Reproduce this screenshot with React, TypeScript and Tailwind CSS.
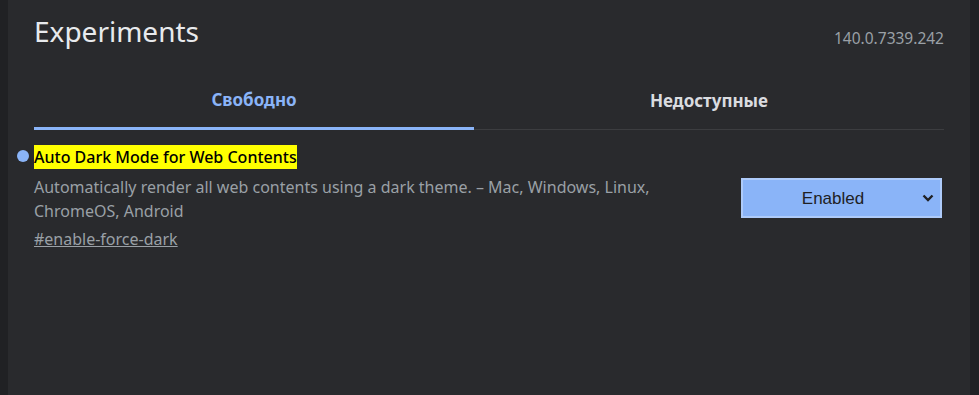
import React from "react";

const Chevron = () => (
  <svg width="12" height="8" viewBox="0 0 12 8" className="text-[#202124]">
    <path d="M1.5 1.5 L6 6 L10.5 1.5" fill="none" stroke="currentColor" strokeWidth="2.4" />
  </svg>
);

export default function App() {
  return (
    <div className="flex h-[395px] w-[979px] bg-[#202124] font-['Noto_Sans',sans-serif]">
      <div className="w-2 shrink-0 bg-[#202124]" />
      <div className="flex-1 bg-[#292a2d] pl-[26px] pr-[26px]">
        {/* header */}
        <div className="flex items-start justify-between pt-[12px]">
          <h1 className="text-[28px] leading-[38px] text-[#e8eaed]">Experiments</h1>
          <span className="mt-[15px] text-[15.5px] text-[#9aa0a6]">140.0.7339.242</span>
        </div>

        {/* tabs */}
        <div className="mt-[21px] flex">
          <div className="flex h-[59px] w-[440px] items-center justify-center border-b-[3px] border-[#8ab4f8] pt-[1px] text-[17px] font-bold text-[#8ab4f8]">
            Свободно
          </div>
          <div className="flex h-[59px] flex-1 items-center justify-center border-b border-[#3c3d40] text-[17px] font-bold text-[#dadce0]">
            Недоступные
          </div>
        </div>

        {/* experiment row */}
        <div className="mt-[15px] flex items-start justify-between">
          <div className="relative w-[680px]">
            <span className="absolute -left-[17px] top-[5px] h-3 w-3 rounded-full bg-[#8ab4f8]" />
            <span className="bg-[#ffff00] py-[1px] text-[16px] font-medium leading-[23px] text-black">
              Auto Dark Mode for Web Contents
            </span>
            <p className="mt-[6px] text-[16px] leading-[24px] text-[#9aa0a6]">
              Automatically render all web contents using a dark theme. – Mac, Windows, Linux, ChromeOS, Android
            </p>
            <a className="mt-[4px] block text-[16px] leading-[24px] text-[#9aa0a6] underline">#enable-force-dark</a>
          </div>
          <div
            className="mr-[2px] mt-[33px] flex h-[40px] w-[201px] items-center justify-between border-2 border-[#aecbfa] bg-[#8ab4f8] pl-[1px] pr-[6px] text-[17px] text-[#202124]"
            style={{ fontFamily: '"Liberation Sans", Arial, sans-serif' }}
          >
            <span className="flex-1 text-center">Enabled</span>
            <Chevron />
          </div>
        </div>
      </div>
      <div className="w-[9px] shrink-0 bg-[#202124]" />
    </div>
  );
}
